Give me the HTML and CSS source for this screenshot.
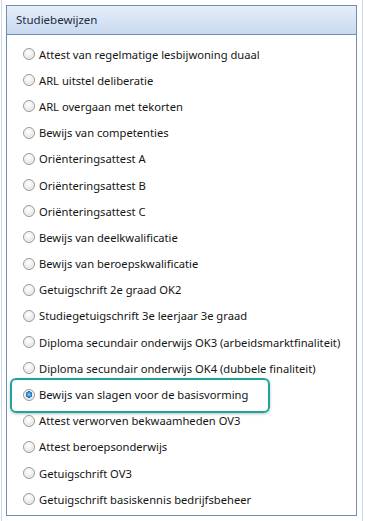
FILE: index.html
```html
<!DOCTYPE html>
<html lang="nl">
<head>
  <meta charset="UTF-8">
  <title>Studiebewijzen</title>
  <link rel="stylesheet" href="styles.css">
</head>
<body>
  <div class="frame">
    <div class="panel">
      <div class="panel-header">Studiebewijzen</div>
      <ul class="options">
        <li class="option"><span class="radio"></span>Attest van regelmatige lesbijwoning duaal</li>
        <li class="option"><span class="radio"></span>ARL uitstel deliberatie</li>
        <li class="option"><span class="radio"></span>ARL overgaan met tekorten</li>
        <li class="option"><span class="radio"></span>Bewijs van competenties</li>
        <li class="option"><span class="radio"></span>Oriënteringsattest A</li>
        <li class="option"><span class="radio"></span>Oriënteringsattest B</li>
        <li class="option"><span class="radio"></span>Oriënteringsattest C</li>
        <li class="option"><span class="radio"></span>Bewijs van deelkwalificatie</li>
        <li class="option"><span class="radio"></span>Bewijs van beroepskwalificatie</li>
        <li class="option"><span class="radio"></span>Getuigschrift 2e graad OK2</li>
        <li class="option"><span class="radio"></span>Studiegetuigschrift 3e leerjaar 3e graad</li>
        <li class="option"><span class="radio"></span>Diploma secundair onderwijs OK3 (arbeidsmarktfinaliteit)</li>
        <li class="option"><span class="radio"></span>Diploma secundair onderwijs OK4 (dubbele finaliteit)</li>
        <li class="option selected"><span class="radio checked"></span>Bewijs van slagen voor de basisvorming</li>
        <li class="option"><span class="radio"></span>Attest verworven bekwaamheden OV3</li>
        <li class="option"><span class="radio"></span>Attest beroepsonderwijs</li>
        <li class="option"><span class="radio"></span>Getuigschrift OV3</li>
        <li class="option"><span class="radio"></span>Getuigschrift basiskennis bedrijfsbeheer</li>
      </ul>
    </div>
  </div>
</body>
</html>
```

FILE: styles.css
```css
* {
  box-sizing: border-box;
}

body {
  margin: 0;
  background: #ffffff;
  font-family: "Noto Sans", "Open Sans", sans-serif;
  font-size: 11.2px;
  color: #141414;
}

.frame {
  width: 362px;
  height: 521px;
  margin-left: 1px;
  border-left: 1px solid #c9d8ec;
  border-right: 1px solid #c9d8ec;
  padding: 5px 0 0 4px;
}

.panel {
  width: 351px;
  border: 1px solid #6e8fb3;
}

.panel-header {
  height: 29px;
  padding: 0 9px;
  line-height: 28px;
  font-size: 11.5px;
  background: linear-gradient(#e6eef9, #c8daf0);
  border-bottom: 1px solid #6e8fb3;
  color: #1c2c40;
}

.options {
  list-style: none;
  margin: 0;
  padding: 6px 0 3px;
}

.option {
  position: relative;
  display: flex;
  align-items: center;
  height: 26.2px;
  padding-left: 16px;
  white-space: nowrap;
}

.radio {
  width: 12px;
  height: 12px;
  margin-right: 4px;
  border-radius: 50%;
  border: 1px solid #9a9a9a;
  background: radial-gradient(circle at 45% 35%, #ffffff 0%, #f0f0f0 45%, #cfcfcf 100%);
  box-shadow: inset 0 0 0 1px #f4f4f4;
  flex-shrink: 0;
}

.radio.checked {
  background:
    radial-gradient(circle at 50% 45%, #8fd0ff 0%, #2a8fdc 30%, #1a5e9c 42%, transparent 46%),
    radial-gradient(circle at 45% 35%, #ffffff 0%, #f0f0f0 45%, #cfcfcf 100%);
}

.option.selected::before {
  content: "";
  position: absolute;
  left: 3px;
  top: -3px;
  width: 256px;
  height: 31px;
  border: 2.5px solid #1ea59b;
  border-radius: 6px;
  box-shadow: 0 1px 3px rgba(0, 0, 0, 0.25);
}
```
